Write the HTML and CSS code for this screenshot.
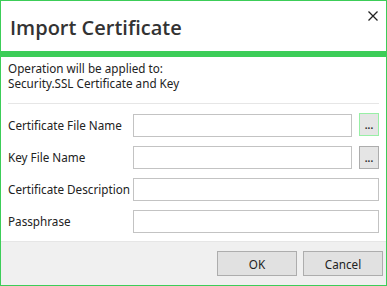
FILE: index.html
```html
<!DOCTYPE html>
<html lang="en">
  <head>
    <meta charset="UTF-8" />
    <meta name="viewport" content="width=device-width, initial-scale=1.0" />
    <title>Import Certificate</title>
    <link rel="stylesheet" href="styles.css">
  </head>
  <body>
    <div class="dialog">
      <div class="dialog-header">
        <h2 class="dialog-title">Import Certificate</h2>
        <button class="close-btn" aria-label="Close">
          <svg width="10" height="10" viewBox="0 0 10 10">
            <path d="M0.5 0.5 L9.5 9.5 M9.5 0.5 L0.5 9.5" stroke="#222" stroke-width="1.3" fill="none" />
          </svg>
        </button>
      </div>
      <div class="accent-bar"></div>
      <div class="dialog-body">
        <div class="info">
          <div class="info-line">Operation will be applied to:</div>
          <div class="info-line">Security.SSL Certificate and Key</div>
        </div>
        <div class="form">
          <label class="form-label">Certificate File Name</label>
          <div class="field">
            <input type="text" class="text-input" />
            <button class="browse-btn focused">...</button>
          </div>
          <label class="form-label">Key File Name</label>
          <div class="field">
            <input type="text" class="text-input" />
            <button class="browse-btn">...</button>
          </div>
          <label class="form-label">Certificate Description</label>
          <div class="field">
            <input type="text" class="text-input" />
          </div>
          <label class="form-label">Passphrase</label>
          <div class="field">
            <input type="password" class="text-input" />
          </div>
        </div>
      </div>
      <div class="dialog-footer">
        <button class="footer-btn">OK</button>
        <button class="footer-btn">Cancel</button>
      </div>
    </div>
  </body>
</html>
```

FILE: styles.css
```css
body {
  margin: 0;
  font-family: "Segoe UI", "Noto Sans", "DejaVu Sans", sans-serif;
  font-size: 11.7px;
  color: #222;
  background: #fff;
}

.dialog {
  width: 387px;
  height: 286px;
  box-sizing: border-box;
  border: 1px solid #3ccd58;
  display: flex;
  flex-direction: column;
  background: #fff;
  overflow: hidden;
}

.dialog > * {
  flex-shrink: 0;
}

.dialog-header {
  height: 50px;
  display: flex;
  justify-content: space-between;
  align-items: flex-start;
}

.dialog-title {
  margin: 14px 0 0 9px;
  font-family: "Open Sans", sans-serif;
  font-weight: 600;
  font-size: 20px;
  line-height: 26px;
  color: #333;
}

.close-btn {
  border: none;
  background: none;
  padding: 0;
  margin: 10px 8px 0 0;
  width: 10px;
  height: 10px;
  display: flex;
}

.accent-bar {
  height: 6px;
  margin: 0 -1px;
  background: #3ccd58;
}

.dialog-body {
  flex: 1;
  padding: 0 7px;
}

.info {
  margin-top: 4px;
  padding-bottom: 12px;
  border-bottom: 1px solid #e6e6e6;
}

.info-line {
  height: 15px;
  line-height: 15px;
  white-space: nowrap;
}

.form {
  display: grid;
  grid-template-columns: 125px 1fr;
  row-gap: 9px;
  margin-top: 10px;
  align-items: center;
}

.form-label {
  line-height: 23px;
  white-space: nowrap;
}

.field {
  display: flex;
  gap: 7px;
  align-items: center;
}

.text-input {
  flex: 1;
  min-width: 0;
  height: 23px;
  box-sizing: border-box;
  border: 1px solid #c3c3c3;
  padding: 0 4px;
  margin: 0;
  font: inherit;
  outline: none;
}

.browse-btn {
  width: 20px;
  height: 23px;
  box-sizing: border-box;
  border: 1px solid #adadad;
  background: #e5e5e5;
  padding: 0;
  font-size: 10px;
  font-weight: bold;
  line-height: 23px;
  color: #333;
}

.browse-btn.focused {
  border-color: #98efa6;
  margin-top: -2px;
}

.dialog-footer {
  height: 44px;
  margin-top: auto;
  border-top: 1px solid #e6e6e6;
  background: #f0f0f0;
  display: flex;
  justify-content: flex-end;
  align-items: flex-start;
  gap: 6px;
  padding: 9px 3px 0 0;
  box-sizing: border-box;
}

.footer-btn {
  width: 80px;
  height: 25px;
  border: 1px solid #adadad;
  background: #e1e1e1;
  font: inherit;
  color: #222;
  padding: 0;
}
```
